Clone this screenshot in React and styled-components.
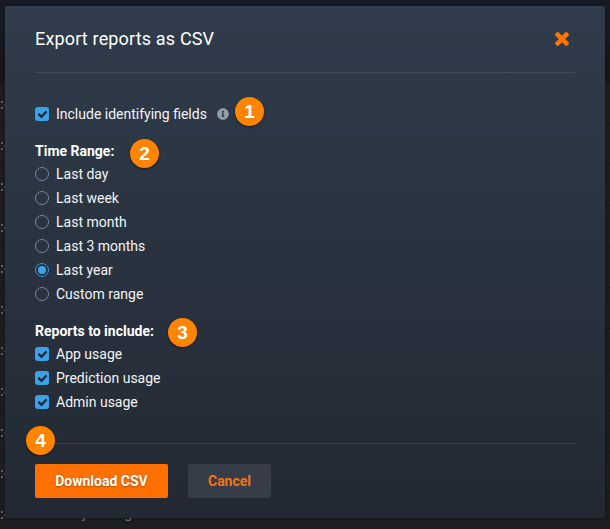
import React from "react";
import styled, { createGlobalStyle } from "styled-components";
import { FaCheck, FaInfoCircle } from "react-icons/fa";

const GlobalStyle = createGlobalStyle`
  *, *::before, *::after { box-sizing: border-box; }
  body { margin: 0; background: #1c1d20; overflow: hidden; }
`;

const Page = styled.div`
  position: relative;
  height: 529px;
  padding: 6px 5px 0;
  overflow: hidden;
  font-family: Roboto, "Liberation Sans", sans-serif;
  font-size: 14px;
  color: #f2f4f6;
`;

/* Dimmed activity log that sits underneath the dialog */
const LogLayer = styled.div`
  position: absolute;
  inset: 0;
`;
const LogHeader = styled.div`
  height: 43px;
  background: #161b26;
`;
const LogColumns = styled.div`
  height: 40px;
  background: #17181b;
`;
const LogRow = styled.div`
  display: flex;
  align-items: center;
  height: 41px;
  background: #1c1e21;
  border-bottom: 1px solid #151619;
`;
const TimeDots = styled.svg`
  display: block;
  width: 6px;
  height: 10px;
  margin: 3px 55px 0 0;
  fill: #606265;
`;
const LogText = styled.span`
  color: #77797c;
  line-height: 20px;
  padding-bottom: 1px;
`;

const Dialog = styled.section`
  position: relative;
  width: 600px;
  height: 512px;
  padding: 0 30px;
  border-radius: 2px;
  background: linear-gradient(#303c4b, #222933);
  box-shadow: 0 0 5px rgba(0, 0, 0, 0.35);
`;
const Header = styled.header`
  display: flex;
  align-items: center;
  justify-content: space-between;
  height: 67px;
  padding: 0 6px 1px 0;
  border-bottom: 1px solid #414b58;
`;
const Title = styled.h1`
  margin: 0;
  font-size: 18px;
  font-weight: 400;
  letter-spacing: 0.16px;
  line-height: 24px;
  color: #fff;
`;
const CloseButton = styled.button`
  display: flex;
  padding: 0;
  border: 0;
  background: none;
  color: #ff7300;
`;
const Body = styled.div`
  height: 371px;
  padding-top: 29px;
  border-bottom: 1px solid #363f4b;
`;
const Option = styled.label`
  display: flex;
  align-items: center;
  height: 24px;
  gap: 7px;
`;
const Group = styled.div`
  margin-top: ${({ $gap }) => $gap}px;
`;
const GroupTitle = styled.h2`
  margin: 0 0 -1px;
  font-size: 14px;
  font-weight: 700;
  line-height: 24px;
  color: #fff;
`;
const CheckBox = styled.span`
  display: flex;
  align-items: center;
  justify-content: center;
  width: 14px;
  height: 14px;
  border-radius: 3px;
  background: #3ca2e8;
  color: #17283a;
`;
const Radio = styled.span`
  display: flex;
  align-items: center;
  justify-content: center;
  width: 14px;
  height: 14px;
  border: 1px solid ${({ $on }) => ($on ? "#3498dc" : "#7a899e")};
  border-radius: 50%;
  &::after {
    content: "";
    width: 8px;
    height: 8px;
    border-radius: 50%;
    background: ${({ $on }) => ($on ? "#3da5ed" : "transparent")};
  }
`;
const InfoIcon = styled(FaInfoCircle)`
  margin-left: 3px;
  color: #969ca5;
`;
const Footer = styled.footer`
  display: flex;
  gap: 20px;
  padding-top: 20px;
`;
const Button = styled.button`
  width: ${({ $primary }) => ($primary ? 133 : 83)}px;
  height: 34px;
  padding: 0;
  border: 0;
  border-radius: 2px;
  font: 700 14px/34px Roboto, "Liberation Sans", sans-serif;
  color: ${({ $primary }) => ($primary ? "#fff" : "#f47414")};
  background: ${({ $primary }) => ($primary ? "#ff7000" : "#373d48")};
  text-shadow: ${({ $primary }) => ($primary ? "0 1px 2px rgba(0,0,0,.35)" : "none")};
`;

/* Numbered callouts pinned over the dialog */
const Callout = styled.span`
  position: absolute;
  left: ${({ $x }) => $x}px;
  top: ${({ $y }) => $y}px;
  width: 29px;
  height: 29px;
  border-radius: 50%;
  background: #ff8400;
  box-shadow: 0 1px 2px rgba(0, 0, 0, 0.55);
  color: #fff;
  font: 700 19px/29px "Liberation Sans", sans-serif;
  text-align: center;
`;

const ranges = ["Last day", "Last week", "Last month", "Last 3 months", "Last year", "Custom range"];
const reports = ["App usage", "Prediction usage", "Admin usage"];
const callouts = [[235, 97], [130, 139], [168, 318], [26, 426]];

const Checked = () => (
  <CheckBox><FaCheck size={9} stroke="currentColor" strokeWidth="45" /></CheckBox>
);

export default function App() {
  return (
    <Page>
      <GlobalStyle />
      <LogLayer>
        <LogHeader />
        <LogColumns />
        {Array.from({ length: 11 }, (_, i) => (
          <LogRow key={i}>
            <TimeDots viewBox="0 0 6 10">
              <path d="M1 1h2v2H1zM1 7h2v2H1zM4 5l2-2v3H4z" />
            </TimeDots>
            {i === 10 && <LogText>Project Migration</LogText>}
          </LogRow>
        ))}
      </LogLayer>
      <Dialog>
        <Header>
          <Title>Export reports as CSV</Title>
          <CloseButton aria-label="Close">
            <svg width="14" height="14" viewBox="110 366 1188 1188" fill="currentColor">
              <path d="M1298 1322q0 40-28 68l-136 136q-28 28-68 28t-68-28l-294-294-294 294q-28 28-68 28t-68-28l-136-136q-28-28-28-68t28-68l294-294-294-294q-28-28-28-68t28-68l136-136q28-28 68-28t68 28l294 294 294-294q28-28 68-28t68 28l136 136q28 28 28 68t-28 68l-294 294 294 294q28 28 28 68z" />
            </svg>
          </CloseButton>
        </Header>
        <Body>
          <Option><Checked />Include identifying fields<InfoIcon size={12} /></Option>
          <Group $gap={13}>
            <GroupTitle>Time Range:</GroupTitle>
            {ranges.map((label) => (
              <Option key={label}><Radio $on={label === "Last year"} />{label}</Option>
            ))}
          </Group>
          <Group $gap={13}>
            <GroupTitle>Reports to include:</GroupTitle>
            {reports.map((label) => (
              <Option key={label}><Checked />{label}</Option>
            ))}
          </Group>
        </Body>
        <Footer>
          <Button $primary>Download CSV</Button>
          <Button>Cancel</Button>
        </Footer>
      </Dialog>
      {callouts.map(([x, y], i) => (
        <Callout key={i} $x={x} $y={y}>{i + 1}</Callout>
      ))}
    </Page>
  );
}
